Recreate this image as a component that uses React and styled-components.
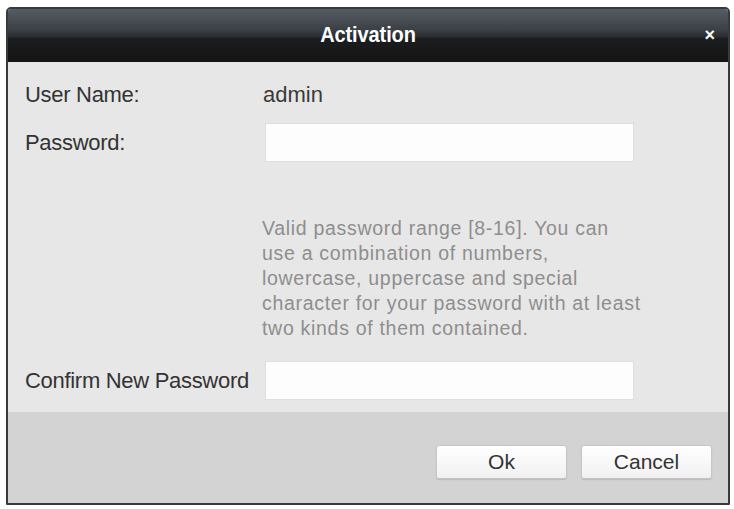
import * as React from 'react';
import styled, { createGlobalStyle } from 'styled-components';

const GlobalStyle = createGlobalStyle`
  html, body {
    margin: 0;
    padding: 0;
    background: #ffffff;
    font-family: "Liberation Sans", Arial, sans-serif;
  }
`;

export default function App() {
  return (
    <Page>
      <GlobalStyle />
      <Dialog>
        <Header>
          <span />
          <Title>Activation</Title>
          <Close>×</Close>
        </Header>
        <Body>
          <Row>
            <Label>User Name:</Label>
            <Value>admin</Value>
          </Row>
          <Row $gap={10}>
            <Label>Password:</Label>
            <Input type="password" />
          </Row>
          <Hint>
            Valid password range [8-16]. You can<br />
            use a combination of numbers,<br />
            lowercase, uppercase and special<br />
            character for your password with at least<br />
            two kinds of them contained.
          </Hint>
          <Row $gap={20}>
            <Label>Confirm New Password</Label>
            <Input type="password" />
          </Row>
        </Body>
        <Footer>
          <Button>Ok</Button>
          <Button>Cancel</Button>
        </Footer>
      </Dialog>
    </Page>
  );
}

const Page = styled.div`
  padding: 7px 4px 4px 6px;
`;

const Dialog = styled.div`
  width: 720px;
  height: 494px;
  border: 2px solid #3a3a3a;
  border-radius: 5px 5px 1px 1px;
  display: flex;
  flex-direction: column;
  overflow: hidden;
`;

const Header = styled.div`
  height: 53px;
  display: grid;
  grid-template-columns: 1fr auto 1fr;
  align-items: center;
  background: linear-gradient(to bottom, #565c63 0%, #3a3f45 40%, #2a2e33 52%, #1b1c1e 56%, #151515 100%);
  color: #ffffff;
`;

const Title = styled.div`
  font-size: 20px;
  font-weight: bold;
  letter-spacing: -0.1px;
  transform: scaleY(1.1);
  margin-top: -2px;
`;

const Close = styled.div`
  justify-self: end;
  padding-right: 13px;
  font-size: 18px;
  font-weight: bold;
  line-height: 1;
  margin-top: -2px;
`;

const Body = styled.div`
  flex: 1;
  background: #e7e7e7;
  padding: 15px 0 0 17px;
`;

const Row = styled.div`
  display: grid;
  grid-template-columns: 240px 369px;
  align-items: center;
  min-height: 36px;
  margin-top: ${p => p.$gap || 0}px;
`;

const Label = styled.div`
  font-size: 22px;
  color: #333333;
  letter-spacing: -0.3px;
  white-space: nowrap;
`;

const Value = styled.div`
  font-size: 22px;
  color: #3a3a3a;
  margin-left: -2px;
`;

const Input = styled.input`
  height: 39px;
  box-sizing: border-box;
  border: 1px solid #dedede;
  background: #fdfdfd;
  outline: none;
`;

const Hint = styled.div`
  margin: 54px 0 0 237px;
  font-size: 19.5px;
  line-height: 25px;
  color: #8e8e8e;
  letter-spacing: 0.7px;
  white-space: nowrap;
`;

const Footer = styled.div`
  height: 91px;
  background: #d3d3d3;
  display: flex;
  justify-content: flex-end;
  align-items: flex-start;
  gap: 14px;
  padding: 33px 16px 0 0;
  box-sizing: border-box;
`;

const Button = styled.button`
  width: 131px;
  height: 34px;
  border: 1px solid #c6c6c6;
  border-radius: 3px;
  background: linear-gradient(to bottom, #ffffff, #f1f1f1);
  box-shadow: 0 1px 1px rgba(0, 0, 0, 0.12);
  font-family: "Liberation Sans", Arial, sans-serif;
  font-size: 21px;
  color: #333333;
`;
